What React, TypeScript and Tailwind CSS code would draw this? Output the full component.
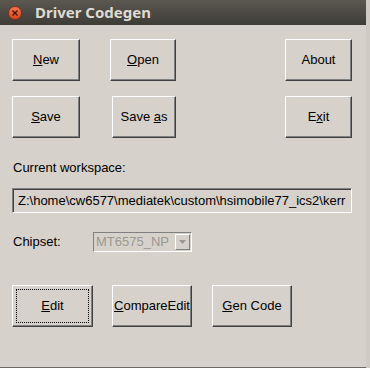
import React from "react";

const btn =
  "flex items-center justify-center h-[42px] bg-[#d6d2cb] border border-t-white border-l-white border-r-[#404040] border-b-[#404040] shadow-[inset_-1px_-1px_0_#808080] text-[13px] text-black";

export default function App() {
  return (
    <div
      className="w-[370px] h-[368px] bg-[#cfcbc4] relative overflow-hidden"
      style={{ fontFamily: '"Liberation Sans", Arial, sans-serif' }}
    >
      <div className="w-[366px] h-[367px] flex flex-col bg-[#d6d2cb]">
        {/* title bar */}
        <div className="h-[25px] shrink-0 flex items-center bg-gradient-to-b from-[#5b5850] to-[#3d3c37] pl-[8px]">
          <div className="w-[14px] h-[14px] rounded-full bg-gradient-to-b from-[#f2774e] to-[#d9451c] border border-[#8a2f14] flex items-center justify-center">
            <svg width="6" height="6" viewBox="0 0 6 6">
              <path d="M0.5 0.5 L5.5 5.5 M5.5 0.5 L0.5 5.5" stroke="#3a1206" strokeWidth="1.2" />
            </svg>
          </div>
          <span
            className="ml-[13px] text-[15px] font-bold text-[#dfdbd2] leading-none"
            style={{ fontFamily: '"Noto Sans", "DejaVu Sans", sans-serif' }}
          >
            Driver Codegen
          </span>
        </div>

        {/* body */}
        <div className="flex-1 flex flex-col pl-[12px] pt-[14px]">
          <div className="flex">
            <div className={`${btn} w-[68px]`}>
              <span>
                <u>N</u>ew
              </span>
            </div>
            <div className={`${btn} w-[66px] ml-[30px]`}>
              <span>
                <u>O</u>pen
              </span>
            </div>
            <div className={`${btn} w-[67px] ml-[109px]`}>
              <span>About</span>
            </div>
          </div>
          <div className="flex mt-[15px]">
            <div className={`${btn} w-[68px]`}>
              <span>
                <u>S</u>ave
              </span>
            </div>
            <div className={`${btn} w-[64px] ml-[32px]`}>
              <span>
                Save <u>a</u>s
              </span>
            </div>
            <div className={`${btn} w-[67px] ml-[109px]`}>
              <span>
                E<u>x</u>it
              </span>
            </div>
          </div>

          <div className="mt-[22px] ml-[1px] text-[13px] text-black leading-[16px]">
            Current workspace:
          </div>

          <div className="mt-[12px] w-[340px] h-[25px] border border-t-[#808080] border-l-[#808080] border-b-white border-r-white shadow-[inset_1px_1px_0_#404040] bg-[#d6d2cb] flex items-center pl-[5px] overflow-hidden whitespace-nowrap text-[13px] text-black">
            Z:\home\cw6577\mediatek\custom\hsimobile77_ics2\kerr
          </div>

          <div className="flex items-center mt-[19px] h-[20px]">
            <span className="ml-[1px] text-[13px] text-black w-[80px]">Chipset:</span>
            <div className="w-[99px] h-[20px] border border-t-[#808080] border-l-[#808080] border-b-white border-r-white flex items-center">
              <span className="flex-1 pl-[2px] text-[13px] text-[#9a9892] whitespace-nowrap">MT6575_NP</span>
              <div className="w-[15px] h-[16px] mr-[1px] bg-[#d6d2cb] border border-t-white border-l-white border-r-[#808080] border-b-[#808080] flex items-center justify-center">
                <svg width="7" height="4" viewBox="0 0 7 4">
                  <path d="M0 0 H7 L3.5 4 Z" fill="#9a9892" />
                </svg>
              </div>
            </div>
          </div>

          <div className="flex mt-[33px]">
            <div className={`${btn} w-[81px] relative`}>
              <div className="absolute inset-[3px] border border-dotted border-black" />
              <span>
                <u>E</u>dit
              </span>
            </div>
            <div className={`${btn} w-[80px] ml-[19px]`}>
              <span>
                <u>C</u>ompareEdit
              </span>
            </div>
            <div className={`${btn} w-[80px] ml-[20px]`}>
              <span>
                <u>G</u>en Code
              </span>
            </div>
          </div>
        </div>
      </div>
      <div className="absolute left-0 bottom-0 w-[366px] h-[1px] bg-[#6b6a66]" />
    </div>
  );
}
